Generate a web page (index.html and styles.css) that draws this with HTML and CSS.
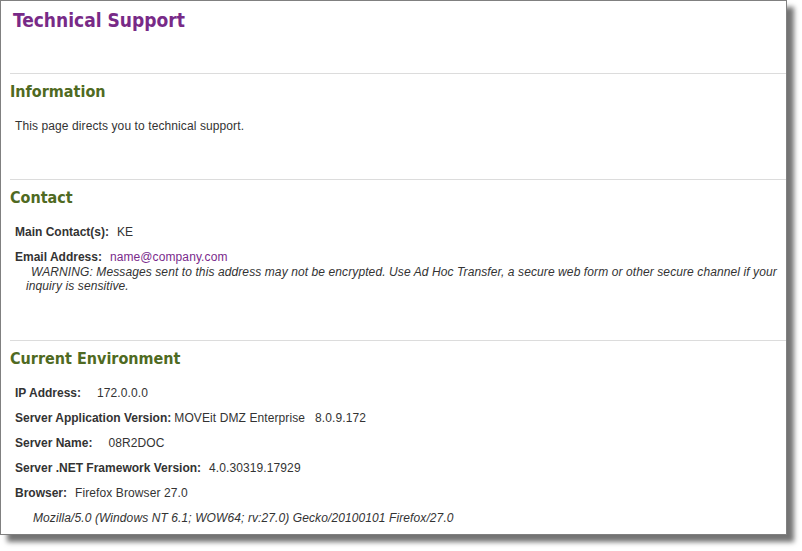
FILE: index.html
```html
<!DOCTYPE html>
<html lang="en">
<head>
    <meta charset="UTF-8">
    <meta name="viewport" content="width=device-width, initial-scale=1.0">
    <title>Technical Support</title>
    <link rel="stylesheet" href="styles.css">
</head>
<body>
    <div class="frame">
        <h1 class="title">Technical Support</h1>

        <!-- 信息 -->
        <div class="section first">
            <h2>Information</h2>
            <p class="row">This page directs you to technical support.</p>
        </div>

        <!-- 联系方式 -->
        <div class="section">
            <h2>Contact</h2>
            <p class="row"><span class="label">Main Contact(s):</span><span class="value">KE</span></p>
            <p class="row"><span class="label">Email Address:</span><a class="value mail" href="javascript:;">name@company.com</a></p>
            <p class="warning">WARNING: Messages sent to this address may not be encrypted. Use Ad Hoc Transfer, a secure web form or other secure channel if your inquiry is sensitive.</p>
        </div>

        <!-- 当前环境 -->
        <div class="section last">
            <h2>Current Environment</h2>
            <p class="row"><span class="label">IP Address:</span><span class="value wide">172.0.0.0</span></p>
            <p class="row"><span class="label">Server Application Version:</span><span class="value tight">MOVEit DMZ Enterprise</span><span class="value version">8.0.9.172</span></p>
            <p class="row"><span class="label">Server Name:</span><span class="value wide">08R2DOC</span></p>
            <p class="row"><span class="label">Server .NET Framework Version:</span><span class="value">4.0.30319.17929</span></p>
            <p class="row"><span class="label">Browser:</span><span class="value">Firefox Browser 27.0</span></p>
            <p class="row agent">Mozilla/5.0 (Windows NT 6.1; WOW64; rv:27.0) Gecko/20100101 Firefox/27.0</p>
        </div>
    </div>
</body>
</html>
```

FILE: styles.css
```css
/* 清除默认样式 */
*{
    padding: 0;
    margin: 0;
}

html, body{
    min-height: 551px;
}

body{
    background-color: #fff;
    font-family: "Liberation Sans", Arial, sans-serif;
    font-size: 12px;
    color: #333;
}

.frame{
    width: 785px;
    height: 533px;
    border: 1px solid #808080;
    background-color: #fff;
    box-shadow: 7px 7px 5px rgba(0, 0, 0, .55);
    overflow: hidden;
}

.title{
    padding: 7px 0 0 12px;
    font-family: "DejaVu Sans Condensed", "DejaVu Sans", sans-serif;
    font-size: 19px;
    line-height: 24px;
    font-weight: bold;
    color: #782a87;
}

.section{
    margin-left: 9px;
    padding-bottom: 45px;
    border-top: 1px solid #dcdcdc;
}

.section.first{
    margin-top: 41px;
}

.section.last{
    padding-bottom: 0;
}

.section h2{
    margin-top: 8px;
    margin-bottom: 16px;
    font-family: "DejaVu Sans Condensed", "DejaVu Sans", sans-serif;
    font-size: 16px;
    line-height: 20px;
    font-weight: bold;
    color: #4f6a22;
}

.row{
    margin-left: 5px;
    line-height: 16px;
    letter-spacing: .1px;
}

.row + .row{
    margin-top: 9px;
}

.label{
    font-weight: bold;
    letter-spacing: 0;
}

.value{
    margin-left: 8px;
}

.value.wide{
    margin-left: 16px;
}

.value.tight{
    margin-left: 3px;
}

.value.version{
    margin-left: 10px;
}

.mail{
    color: #7a2a8c;
    text-decoration: none;
}

.warning{
    margin: 0 6px 2px 16px;
    text-indent: 5px;
    line-height: 14px;
    font-style: italic;
    letter-spacing: .1px;
}

.agent{
    margin-left: 23px;
    font-style: italic;
}
```
